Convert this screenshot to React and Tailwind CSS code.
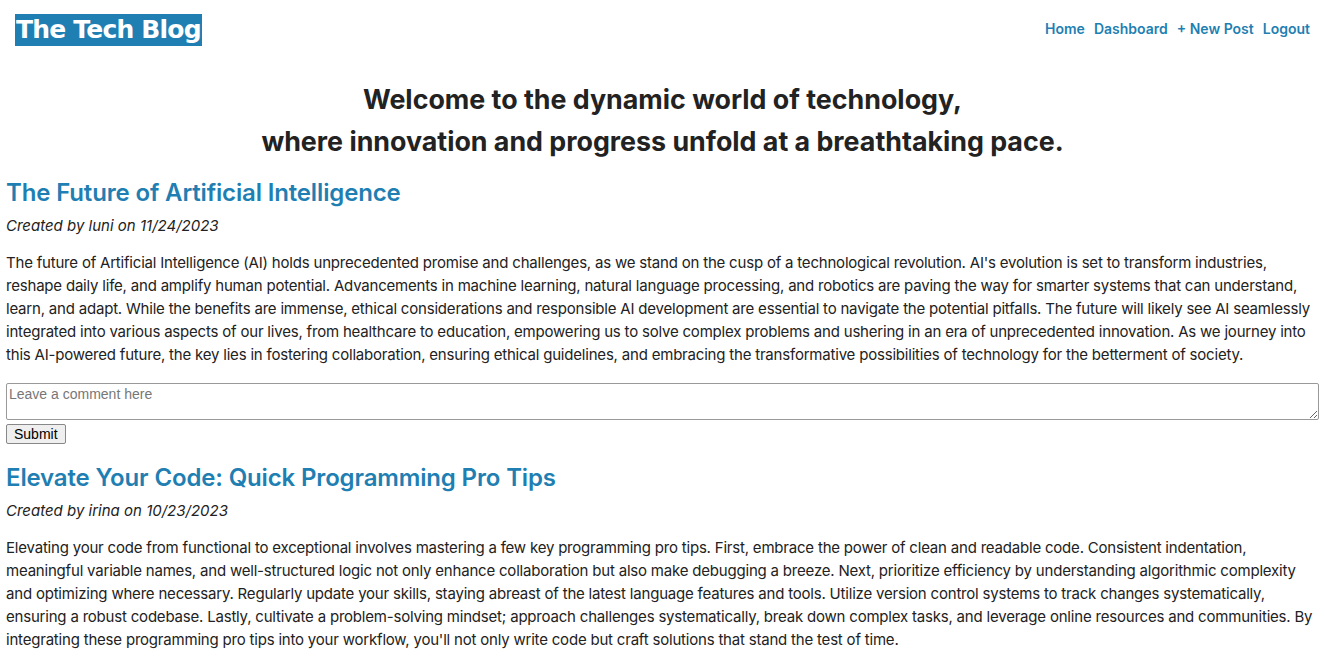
export default function App() {
  const posts = [
    {
      title: "The Future of Artificial Intelligence",
      by: "luni",
      date: "11/24/2023",
      body: "The future of Artificial Intelligence (AI) holds unprecedented promise and challenges, as we stand on the cusp of a technological revolution. AI's evolution is set to transform industries, reshape daily life, and amplify human potential. Advancements in machine learning, natural language processing, and robotics are paving the way for smarter systems that can understand, learn, and adapt. While the benefits are immense, ethical considerations and responsible AI development are essential to navigate the potential pitfalls. The future will likely see AI seamlessly integrated into various aspects of our lives, from healthcare to education, empowering us to solve complex problems and ushering in an era of unprecedented innovation. As we journey into this AI-powered future, the key lies in fostering collaboration, ensuring ethical guidelines, and embracing the transformative possibilities of technology for the betterment of society.",
    },
    {
      title: "Elevate Your Code: Quick Programming Pro Tips",
      by: "irina",
      date: "10/23/2023",
      body: "Elevating your code from functional to exceptional involves mastering a few key programming pro tips. First, embrace the power of clean and readable code. Consistent indentation, meaningful variable names, and well-structured logic not only enhance collaboration but also make debugging a breeze. Next, prioritize efficiency by understanding algorithmic complexity and optimizing where necessary. Regularly update your skills, staying abreast of the latest language features and tools. Utilize version control systems to track changes systematically, ensuring a robust codebase. Lastly, cultivate a problem-solving mindset; approach challenges systematically, break down complex tasks, and leverage online resources and communities. By integrating these programming pro tips into your workflow, you'll not only write code but craft solutions that stand the test of time.",
    },
  ];
  return (
    <div className="min-h-screen bg-white text-[#222] font-['Inter',sans-serif]">
      <header className="flex items-start justify-between pl-[15px] pr-[15px] pt-[14px]">
        <h1 className="bg-[#1f7fb2] text-white font-['DejaVu_Sans',sans-serif] font-bold text-[25px] leading-[32px] px-[1px] tracking-[-0.8px]">
          The Tech Blog
        </h1>
        <nav className="flex gap-[9px] text-[14px] font-semibold text-[#1f7fb2] pt-[4px]">
          <a>Home</a>
          <a>Dashboard</a>
          <a>+ New Post</a>
          <a>Logout</a>
        </nav>
      </header>
      <h2 className="text-center font-bold text-[26.8px] leading-[42px] mt-[32px] text-[#222]">
        Welcome to the dynamic world of technology,
        <br />
        where innovation and progress unfold at a breathtaking pace.
      </h2>
      <main className="px-[6px]">
        {posts.map((p, i) => (
          <article key={i} className="">
            <h3 className="text-[24px] font-semibold text-[#1f7fb2] leading-[30px] mt-[16px] tracking-[-0.15px]">
              {p.title}
            </h3>
            <p className="italic text-[15px] leading-[20px] mt-[8px]">
              Created by {p.by} on {p.date}
            </p>
            <p className="text-[15px] leading-[23px] mt-[15px] tracking-[-0.2px]">{p.body}</p>
            {i === 0 && (
              <form className="mt-[17px] mb-[18px]">
                <textarea
                  placeholder="Leave a comment here"
                  className="block w-full h-[37px] border border-[#999] rounded-[2px] text-[14px] leading-[16px] px-[2px] py-[2px] font-['Liberation_Sans',sans-serif] placeholder:text-[#777]"
                />
                <button
                  type="button"
                  className="mt-[4px] border border-[#888] bg-[#efefef] rounded-[2px] px-[7px] text-[14px] leading-[18px] font-['Liberation_Sans',sans-serif] text-black"
                >
                  Submit
                </button>
              </form>
            )}
          </article>
        ))}
      </main>
    </div>
  );
}
